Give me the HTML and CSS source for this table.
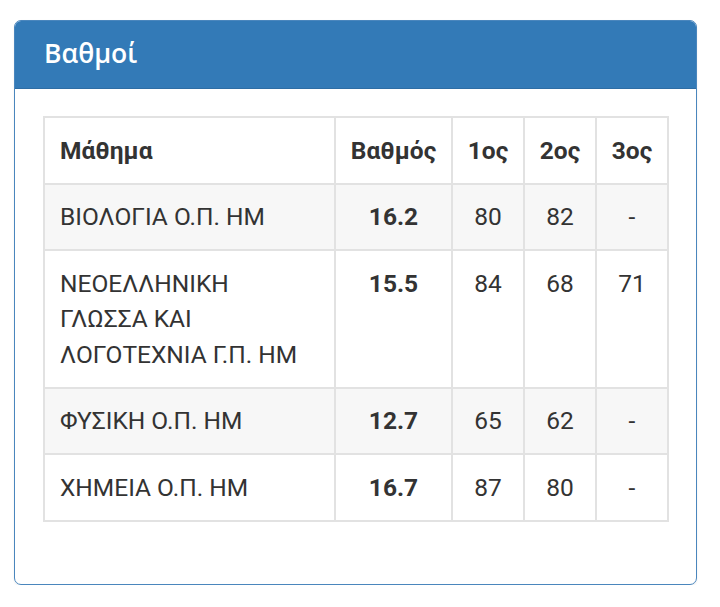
FILE: index.html
```
<!DOCTYPE html>
<html lang="el">
<head>
<meta charset="utf-8">
<link rel="stylesheet" href="styles.css">
</head>
<body>
<div class="panel">
  <div class="panel-heading">Βαθμοί</div>
  <div class="panel-body">
    <table class="grades">
      <colgroup>
        <col class="c-subject"><col class="c-grade"><col class="c-sm"><col class="c-sm"><col class="c-sm">
      </colgroup>
      <thead>
        <tr><th class="left">Μάθημα</th><th>Βαθμός</th><th>1ος</th><th>2ος</th><th>3ος</th></tr>
      </thead>
      <tbody>
        <tr class="odd"><td class="left">ΒΙΟΛΟΓΙΑ Ο.Π. ΗΜ</td><td class="grade">16.2</td><td>80</td><td>82</td><td>-</td></tr>
        <tr><td class="left">ΝΕΟΕΛΛΗΝΙΚΗ ΓΛΩΣΣΑ ΚΑΙ ΛΟΓΟΤΕΧΝΙΑ Γ.Π. ΗΜ</td><td class="grade">15.5</td><td>84</td><td>68</td><td>71</td></tr>
        <tr class="odd"><td class="left">ΦΥΣΙΚΗ Ο.Π. ΗΜ</td><td class="grade">12.7</td><td>65</td><td>62</td><td>-</td></tr>
        <tr><td class="left">ΧΗΜΕΙΑ Ο.Π. ΗΜ</td><td class="grade">16.7</td><td>87</td><td>80</td><td>-</td></tr>
      </tbody>
    </table>
  </div>
</div>
</body>
</html>
```
FILE: styles.css
```
html, body {
  margin: 0;
  padding: 0;
  background: #fff;
}
body {
  padding: 20px 23px 0 14px;
  font-family: Roboto, "Liberation Sans", sans-serif;
  color: #333;
}
.panel {
  width: 683px;
  height: 565px;
  border: 1px solid #4a86bd;
  border-radius: 7px;
  overflow: hidden;
  box-sizing: border-box;
  box-shadow: 0 1px 2px rgba(0,0,0,0.08);
}
.panel-heading {
  background: #337ab7;
  color: #fff;
  height: 68px;
  box-sizing: border-box;
  padding: 14px 0 0 29px;
  font-family: "Open Sans", Roboto, sans-serif;
  font-weight: 600;
  font-size: 26.5px;
  line-height: 36px;
  border-bottom: 1px solid #2e6da4;
}
.panel-body {
  padding: 27px 28px 0 28px;
}
.grades {
  border-collapse: collapse;
  table-layout: fixed;
  width: 624px;
  font-size: 24.5px;
  line-height: 35.5px;
}
.c-subject { width: 291px; }
.c-grade { width: 117px; }
.c-sm { width: 72px; }
.grades th, .grades td {
  border: 2px solid #e2e2e2;
  padding: 14.5px 0;
  text-align: center;
  vertical-align: top;
}
.grades th {
  font-weight: 700;
}
.grades .left {
  text-align: left;
  padding-left: 15px;
  padding-right: 15px;
}
.grades .grade {
  font-weight: 700;
}
.grades tr.odd td {
  background: #f7f7f7;
}
```
